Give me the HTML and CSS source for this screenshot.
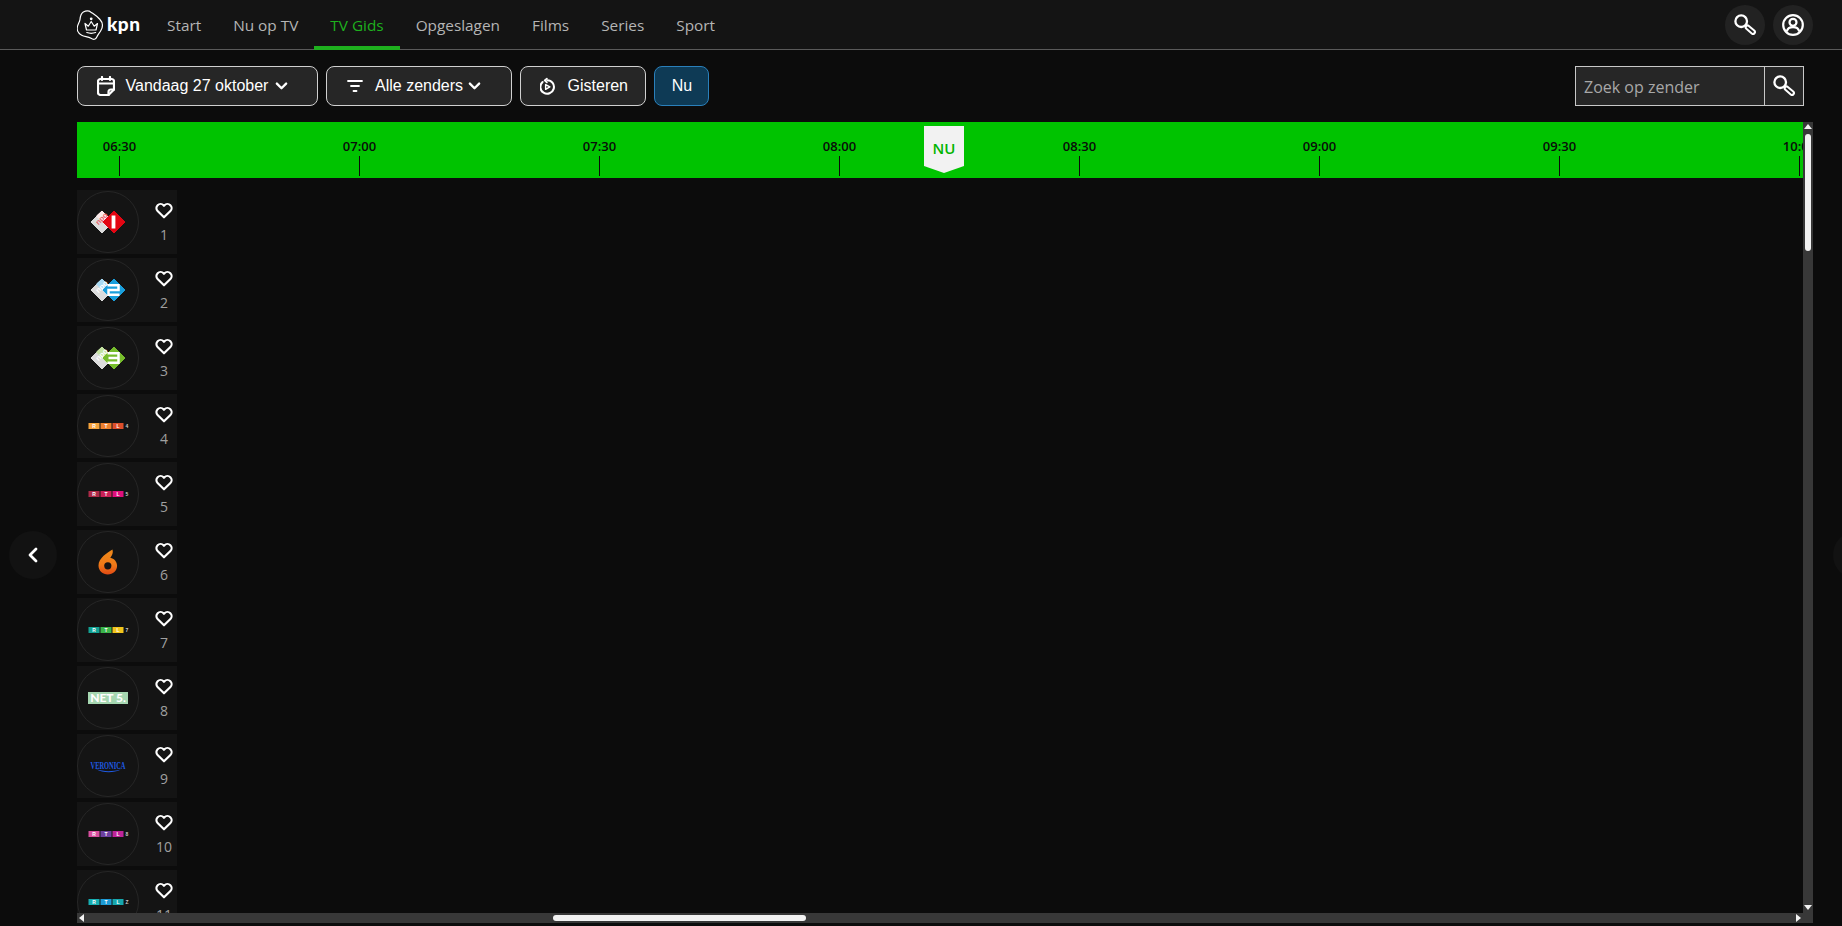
FILE: index.html
```html
<!DOCTYPE html>
<html lang="nl">
<head>
    <meta charset="UTF-8">
    <meta name="viewport" content="width=device-width, initial-scale=1.0">
    <title>KPN TV Gids</title>
    <link rel="stylesheet" href="styles.css">
</head>
<body>
    <svg class="defs" width="0" height="0">
        <symbol id="heart" viewBox="0 0 16 15">
            <path d="M8 13.600 2.300 8A3.700 3.700 0 0 1 7.600 2.800l.4.500.4-.5A3.700 3.700 0 0 1 13.700 8Z" fill="none" stroke="#fff" stroke-width="1.900" stroke-linejoin="round"/>
        </symbol>
        <symbol id="search" viewBox="0 0 24 24">
            <circle cx="8.200" cy="8.200" r="5.800" fill="none" stroke="#fff" stroke-width="2.300"/>
            <path d="M14.600 14.400 20 19" fill="none" stroke="#fff" stroke-width="5.800" stroke-linecap="round"/>
            <path d="M14.600 14.400 20 19" fill="none" stroke="#222" stroke-width="1.800" stroke-linecap="round"/>
        </symbol>
        <symbol id="chev" viewBox="0 0 14 9">
            <path d="M1.800 1.800 7 7l5.200-5.200" fill="none" stroke="#fff" stroke-width="2.600" stroke-linecap="round" stroke-linejoin="round"/>
        </symbol>
    </svg>

    <header class="topbar">
        <a class="logo">
            <svg width="28" height="30" viewBox="0 0 28 30" fill="none" stroke="#fff" stroke-width="1.200" stroke-linejoin="round" stroke-linecap="round">
                <path d="M6.300 2C9 .6 12 .6 14 2.200 16.500 4 20 6 23 9.500 26 12.800 26 16.800 24 20.300 22.500 23 21 24.500 19.800 27 18.800 29.600 16.500 30 14 28.300 11 26.300 7.500 27 4.700 25.300 1.500 23.300-.3 21 .3 17.500.7 14 2.500 12.500 3 9.500 3.300 6.500 4 3.300 6.300 2Z"/>
                <path d="M8 13.500 9.500 20h9.500l1.500-6.500-3.300 2.700L14.200 11.500 11.300 16.200Z"/>
                <path d="M9.800 22.500c2.800 1 6 1 8.800 0"/>
                <circle cx="14.200" cy="8.800" r=".8" fill="#fff"/>
            </svg>
            <span class="logo-text">kpn</span>
        </a>
        <nav class="mainnav">
            <a>Start</a>
            <a>Nu op TV</a>
            <a class="active">TV Gids</a>
            <a>Opgeslagen</a>
            <a>Films</a>
            <a>Series</a>
            <a>Sport</a>
        </nav>
        <div class="topbar-right">
            <button class="round"><svg width="24" height="24"><use href="#search"/></svg></button>
            <button class="round">
                <svg width="24" height="24" viewBox="0 0 24 24" fill="none" stroke="#fff" stroke-width="2.200">
                    <circle cx="12" cy="12" r="9.800"/>
                    <circle cx="12" cy="9.300" r="3.500"/>
                    <path d="M5.800 18.500c.6-3 2.800-4.300 6.200-4.300s5.600 1.300 6.200 4.300"/>
                </svg>
            </button>
        </div>
    </header>

    <div class="toolbar">
        <button class="btn btn-date">
            <svg width="18" height="20" viewBox="0 0 18 20" fill="none" stroke="#fff" stroke-width="2.200" stroke-linejoin="round" stroke-linecap="round">
                <path d="M11.500 19H3.500A2.500 2.500 0 0 1 1 16.500V5.500A2.500 2.500 0 0 1 3.500 3h11A2.500 2.500 0 0 1 17 5.500v8Z"/>
                <path d="M1 7.500h16M5 1v3M13 1v3"/>
                <path d="M11.500 19v-3a2.500 2.500 0 0 1 2.500-2.500h3"/>
            </svg>
            <span>Vandaag 27 oktober</span>
            <svg class="chev" width="13" height="8"><use href="#chev"/></svg>
        </button>
        <button class="btn btn-filter">
            <svg width="16" height="12" viewBox="0 0 16 12" fill="none" stroke="#fff" stroke-width="1.800" stroke-linecap="round">
                <path d="M1 1h14M4 6h8M6.500 11h3"/>
            </svg>
            <span>Alle zenders</span>
            <svg class="chev" width="13" height="8"><use href="#chev"/></svg>
        </button>
        <button class="btn btn-back">
            <svg width="18" height="20" viewBox="0 0 18 20" fill="none" stroke="#fff" stroke-width="2.500" stroke-linecap="round" stroke-linejoin="round">
                <path d="M3.200 5A8.400 8.400 0 1 0 9 2.800"/>
                <path d="M8.500 .8 5.800 3l2.700 2.500" stroke-width="2.200"/>
                <path d="M7 8.200v6l5.200-3Z" stroke-width="1.800"/>
            </svg>
            <span>Gisteren</span>
        </button>
        <button class="btn btn-now">Nu</button>
        <div class="zoek">
            <input type="text" placeholder="Zoek op zender">
            <button><svg width="24" height="24"><use href="#search"/></svg></button>
        </div>
    </div>

    <main class="guide">
        <div class="guide-main">
            <div class="timeline">
                <div class="tick"><span>06:30</span><i></i></div>
                <div class="tick"><span>07:00</span><i></i></div>
                <div class="tick"><span>07:30</span><i></i></div>
                <div class="tick"><span>08:00</span><i></i></div>
                <div class="tick"><span>08:30</span><i></i></div>
                <div class="tick"><span>09:00</span><i></i></div>
                <div class="tick"><span>09:30</span><i></i></div>
                <div class="tick"><span>10:00</span><i></i></div>
                <div class="now-flag">NU</div>
            </div>
            <div class="channels">
                <div class="channel">
                    <div class="zender">
                        <svg width="38" height="26" viewBox="-1 -1 38 26">
                            <path class="ruit" d="M12 1 23 12 12 23 1 12Z" fill="#dcdcdc" stroke="#dcdcdc"/>
                            <path class="ruit" d="M12 1 22 11 17 16.500 6.500 6Z" fill="#fbeaea" stroke="#fbeaea"/>
                            <text class="npo" x="12" y="11" transform="rotate(-45 12 9)" fill="#e8606a">npo</text>
                            <path class="ruit" d="M24 1 35 12 24 23 13 12Z" fill="#e30613" stroke="#e30613"/>
                            <path d="M23.500 5.500v13" stroke="#fff" stroke-width="3.800"/>
                        </svg>
                    </div>
                    <div class="side"><svg class="heart" width="18" height="17"><use href="#heart"/></svg><span>1</span></div>
                </div>
                <div class="channel">
                    <div class="zender">
                        <svg width="38" height="26" viewBox="-1 -1 38 26">
                            <path class="ruit" d="M12 1 23 12 12 23 1 12Z" fill="#dcdcdc" stroke="#dcdcdc"/>
                            <path class="ruit" d="M12 1 22 11 17 16.500 6.500 6Z" fill="#a8daf4" stroke="#a8daf4"/>
                            <text class="npo" x="12" y="11" transform="rotate(-45 12 9)" fill="#fff">npo</text>
                            <path class="ruit" d="M24 1 35 12 24 23 13 12Z" fill="#1a9fdc" stroke="#1a9fdc"/>
                            <path d="M17.500 7.300h11v4.700h-10v4.700h11" fill="none" stroke="#fff" stroke-width="2.500"/>
                        </svg>
                    </div>
                    <div class="side"><svg class="heart" width="18" height="17"><use href="#heart"/></svg><span>2</span></div>
                </div>
                <div class="channel">
                    <div class="zender">
                        <svg width="38" height="26" viewBox="-1 -1 38 26">
                            <path class="ruit" d="M12 1 23 12 12 23 1 12Z" fill="#dcdcdc" stroke="#dcdcdc"/>
                            <path class="ruit" d="M12 1 22 11 17 16.500 6.500 6Z" fill="#c3e2a0" stroke="#c3e2a0"/>
                            <text class="npo" x="12" y="11" transform="rotate(-45 12 9)" fill="#fff">npo</text>
                            <path class="ruit" d="M24 1 35 12 24 23 13 12Z" fill="#76bc2c" stroke="#76bc2c"/>
                            <path d="M17.500 7.300h11v9.400h-11M18.500 12h10" fill="none" stroke="#fff" stroke-width="2.500"/>
                        </svg>
                    </div>
                    <div class="side"><svg class="heart" width="18" height="17"><use href="#heart"/></svg><span>3</span></div>
                </div>
                <div class="channel">
                    <div class="zender">
                        <svg class="rtl" width="44" height="8" viewBox="0 0 44 8">
                            <rect x="2.500" y="1" width="11" height="6" fill="#f5a33c"/>
                            <rect x="14.500" y="1" width="11" height="6" fill="#ee7f2d"/>
                            <rect x="26.500" y="1" width="11" height="6" fill="#de4f2b"/>
                            <text x="8" y="6" fill="#fff">R</text><text x="20" y="6" fill="#fff">T</text><text x="32" y="6" fill="#fff">L</text>
                            <text x="41" y="6" fill="#ccc">4</text>
                        </svg>
                    </div>
                    <div class="side"><svg class="heart" width="18" height="17"><use href="#heart"/></svg><span>4</span></div>
                </div>
                <div class="channel">
                    <div class="zender">
                        <svg class="rtl" width="44" height="8" viewBox="0 0 44 8">
                            <rect x="2.500" y="1" width="11" height="6" fill="#ad2a48"/>
                            <rect x="14.500" y="1" width="11" height="6" fill="#c92056"/>
                            <rect x="26.500" y="1" width="11" height="6" fill="#e00f7c"/>
                            <text x="8" y="6" fill="#fff">R</text><text x="20" y="6" fill="#fff">T</text><text x="32" y="6" fill="#fff">L</text>
                            <text x="41" y="6" fill="#ccc">5</text>
                        </svg>
                    </div>
                    <div class="side"><svg class="heart" width="18" height="17"><use href="#heart"/></svg><span>5</span></div>
                </div>
                <div class="channel">
                    <div class="zender">
                        <svg width="20" height="26" viewBox="0 0 20 26">
                            <defs>
                                <linearGradient id="zes" x1="0" y1="0" x2="0" y2="1">
                                    <stop offset="0" stop-color="#f08a1a"/>
                                    <stop offset=".6" stop-color="#ef7a18"/>
                                    <stop offset="1" stop-color="#e24a14"/>
                                </linearGradient>
                            </defs>
                            <path d="M14.500 .5C9.500 3.500.5 9 .5 16.500c0 5.200 4.200 9 9.300 9s9.300-3.800 9.300-8.700c0-4-2.900-7.300-6.800-8.100C14 6.500 15.500 4 14.500 .5Z" fill="url(#zes)"/>
                            <circle cx="9.800" cy="16.800" r="3.600" fill="#141414"/>
                        </svg>
                    </div>
                    <div class="side"><svg class="heart" width="18" height="17"><use href="#heart"/></svg><span>6</span></div>
                </div>
                <div class="channel">
                    <div class="zender">
                        <svg class="rtl" width="44" height="8" viewBox="0 0 44 8">
                            <rect x="2.500" y="1" width="11" height="6" fill="#12a294"/>
                            <rect x="14.500" y="1" width="11" height="6" fill="#3bb44a"/>
                            <rect x="26.500" y="1" width="11" height="6" fill="#f2c41c"/>
                            <text x="8" y="6" fill="#fff">R</text><text x="20" y="6" fill="#fff">T</text><text x="32" y="6" fill="#fff">L</text>
                            <text x="41" y="6" fill="#ccc">7</text>
                        </svg>
                    </div>
                    <div class="side"><svg class="heart" width="18" height="17"><use href="#heart"/></svg><span>7</span></div>
                </div>
                <div class="channel">
                    <div class="zender"><span class="net5">NET 5.</span></div>
                    <div class="side"><svg class="heart" width="18" height="17"><use href="#heart"/></svg><span>8</span></div>
                </div>
                <div class="channel">
                    <div class="zender">
                        <svg width="38" height="14" viewBox="0 0 38 14">
                            <text class="veronica" x="19" y="9.500" textLength="35" lengthAdjust="spacingAndGlyphs">VERONICA</text>
                            <path d="M7 10.300c8 2.400 16 2.400 25 .2-8 4-18 3.500-25-.2Z" fill="#1f5be6"/>
                        </svg>
                    </div>
                    <div class="side"><svg class="heart" width="18" height="17"><use href="#heart"/></svg><span>9</span></div>
                </div>
                <div class="channel">
                    <div class="zender">
                        <svg class="rtl" width="44" height="8" viewBox="0 0 44 8">
                            <rect x="2.500" y="1" width="11" height="6" fill="#d64e9e"/>
                            <rect x="14.500" y="1" width="11" height="6" fill="#6c3fa0"/>
                            <rect x="26.500" y="1" width="11" height="6" fill="#bf249a"/>
                            <text x="8" y="6" fill="#fff">R</text><text x="20" y="6" fill="#fff">T</text><text x="32" y="6" fill="#fff">L</text>
                            <text x="41" y="6" fill="#ccc">8</text>
                        </svg>
                    </div>
                    <div class="side"><svg class="heart" width="18" height="17"><use href="#heart"/></svg><span>10</span></div>
                </div>
                <div class="channel">
                    <div class="zender">
                        <svg class="rtl" width="44" height="8" viewBox="0 0 44 8">
                            <rect x="2.500" y="1" width="11" height="6" fill="#17aeb2"/>
                            <rect x="14.500" y="1" width="11" height="6" fill="#1d9bd6"/>
                            <rect x="26.500" y="1" width="11" height="6" fill="#16a7ae"/>
                            <text x="8" y="6" fill="#fff">R</text><text x="20" y="6" fill="#fff">T</text><text x="32" y="6" fill="#fff">L</text>
                            <text x="41" y="6" fill="#ccc">Z</text>
                        </svg>
                    </div>
                    <div class="side"><svg class="heart" width="18" height="17"><use href="#heart"/></svg><span>11</span></div>
                </div>
            </div>
        </div>
        <div class="vscroll">
            <i class="arrow-up"></i>
            <div class="vthumb"></div>
            <i class="arrow-down"></i>
        </div>
        <div class="hscroll">
            <i class="arrow-left"></i>
            <div class="hthumb"></div>
            <i class="arrow-right"></i>
        </div>
        <div class="scroll-corner"></div>
    </main>

    <button class="pager pager-prev">
        <svg width="12" height="16" viewBox="0 0 12 16"><path d="M9 2 3 8l6 6" fill="none" stroke="#fff" stroke-width="2.800" stroke-linecap="round" stroke-linejoin="round"/></svg>
    </button>
    <button class="pager pager-next"></button>
</body>
</html>
```

FILE: styles.css
```css
* {
    box-sizing: border-box;
}
html, body {
    height: 100%;
}
body {
    margin: 0;
    display: flex;
    flex-direction: column;
    overflow: hidden;
    background: #0c0c0c;
    color: #fff;
    font-family: "Open Sans", sans-serif;
}
.defs {
    position: absolute;
}
button {
    font: inherit;
    color: inherit;
    cursor: pointer;
}

/* top bar */
.topbar {
    display: flex;
    align-items: stretch;
    height: 50px;
    flex: none;
    padding: 0 29px 0 77px;
    background: #141414;
    border-bottom: 1px solid #5a5a5a;
}
.logo {
    display: flex;
    align-items: center;
    gap: 2px;
    width: 74px;
}
.logo-text {
    font-family: Lato, sans-serif;
    font-weight: 900;
    font-size: 19px;
    letter-spacing: .5px;
    line-height: 1;
    margin-top: -3px;
}
.mainnav {
    display: flex;
}
.mainnav a {
    display: flex;
    align-items: center;
    padding: 4px 16px 1px;
    margin-bottom: -1px;
    font-size: 15.350px;
    color: #b5b5b5;
    border-bottom: 4px solid transparent;
}
.mainnav a.active {
    color: #1eb01e;
    border-bottom-color: #1eb01e;
}
.topbar-right {
    margin-left: auto;
    display: flex;
    align-items: center;
    gap: 8px;
}
.round {
    width: 40px;
    height: 40px;
    padding: 0;
    border: 0;
    border-radius: 50%;
    background: #222;
    display: flex;
    align-items: center;
    justify-content: center;
}

/* filter row */
.toolbar {
    display: flex;
    flex: none;
    gap: 8px;
    padding: 16px 38px 16px 77px;
}
.btn {
    display: flex;
    align-items: center;
    height: 40px;
    padding: 0 17px;
    border: 1px solid #d0d0d0;
    border-radius: 8px;
    background: #262626;
    font-family: "Liberation Sans", Arial, sans-serif;
    font-size: 16px;
    white-space: nowrap;
}
.btn-date {
    width: 241px;
    padding-left: 19px;
    gap: 10.500px;
}
.btn-filter {
    width: 186px;
    padding-left: 20px;
    gap: 12px;
}
.btn-back {
    width: 126px;
    padding-left: 19px;
    gap: 13px;
}
.btn-now {
    width: 55px;
    justify-content: center;
    padding: 0 0 0 1px;
    background: #0e3a55;
    border-color: #2a80bb;
}
.chev {
    margin-left: -4px;
}
.btn-filter .chev {
    margin-left: -7px;
}
.zoek {
    margin-left: auto;
    display: flex;
    height: 40px;
    width: 229px;
    border: 1px solid #c8c8c8;
    background: #262626;
}
.zoek input {
    width: 188px;
    padding: 2px 8px 0;
    border: 0;
    outline: 0;
    background: transparent;
    color: #fff;
    font-family: "Open Sans", sans-serif;
    font-size: 16px;
}
.zoek input::placeholder {
    color: #a8a8a8;
    opacity: 1;
}
.zoek button {
    flex: 1;
    padding: 0;
    border: 0;
    border-left: 1px solid #c8c8c8;
    background: transparent;
    display: flex;
    align-items: center;
    justify-content: center;
}

/* guide */
.guide {
    flex: 1;
    min-height: 0;
    display: grid;
    grid-template-columns: 1fr 10px;
    grid-template-rows: 1fr 10px;
    margin: 0 29px 3px 77px;
}
.guide-main {
    min-width: 0;
    min-height: 0;
    overflow: hidden;
}
.timeline {
    position: relative;
    display: flex;
    height: 56px;
    background: #00c300;
    color: #0a0a0a;
    overflow: hidden;
}
.tick {
    flex: none;
    width: 240px;
    display: flex;
    flex-direction: column;
    align-items: center;
    padding-top: 15px;
    font-size: 13px;
    font-weight: 600;
    line-height: 19px;
}
.tick:first-child {
    margin-left: -77.500px;
}
.tick i {
    display: block;
    width: 1px;
    height: 20px;
    background: #0a0a0a;
}
.now-flag {
    position: absolute;
    left: 847px;
    top: 4px;
    width: 40px;
    height: 47px;
    padding-top: 11px;
    background: #f2f2f2;
    color: #00b400;
    font-size: 15px;
    font-weight: 600;
    line-height: 22px;
    text-align: center;
    clip-path: polygon(0 0, 100% 0, 100% 85%, 50% 100%, 0 85%);
}
.channels {
    display: flex;
    flex-direction: column;
    gap: 4px;
    margin-top: 12px;
}
.channel {
    display: flex;
    width: 100px;
    height: 64px;
    flex: none;
    background: #141414;
}
.zender {
    width: 62px;
    height: 62px;
    margin-top: 1px;
    flex: none;
    border: 1px solid #262626;
    border-radius: 50%;
    display: flex;
    align-items: center;
    justify-content: center;
}
.side {
    flex: 1;
    display: flex;
    flex-direction: column;
    align-items: center;
    padding: 12px 0 0 12px;
    color: #a0a0a0;
    font-size: 14px;
    line-height: 20px;
}
.heart {
    margin-bottom: 6px;
}
.ruit {
    stroke-width: 1;
    stroke-linejoin: round;
}
.npo {
    font-family: "Liberation Sans", sans-serif;
    font-size: 7.500px;
    font-weight: 700;
    text-anchor: middle;
}
.rtl text {
    font-family: "Liberation Sans", sans-serif;
    font-size: 5px;
    font-weight: 700;
    text-anchor: middle;
}
.net5 {
    width: 40px;
    height: 12px;
    background: #a6d7b1;
    font-family: Lato, sans-serif;
    font-size: 12px;
    font-weight: 900;
    line-height: 12px;
    text-align: center;
    white-space: nowrap;
}
.veronica {
    font-family: "Liberation Serif", serif;
    font-size: 10px;
    font-weight: 700;
    fill: #1f5be6;
    text-anchor: middle;
}

/* scrollbars */
.vscroll, .hscroll, .scroll-corner {
    background: #383838;
}
.vscroll {
    display: flex;
    flex-direction: column;
    align-items: center;
    padding: 2px 0;
}
.vthumb {
    width: 6px;
    height: 117px;
    margin-top: 5px;
    border-radius: 3px;
    background: #f2f2f2;
}
.hscroll {
    display: flex;
    align-items: center;
    padding: 0 2px;
}
.hthumb {
    width: 253px;
    height: 6px;
    margin-left: 469px;
    border-radius: 3px;
    background: #f2f2f2;
}
.arrow-up, .arrow-down, .arrow-left, .arrow-right {
    display: block;
    width: 0;
    height: 0;
    border: 4px solid transparent;
    flex: none;
}
.arrow-up {
    border-top: 0;
    border-bottom: 5px solid #f2f2f2;
}
.arrow-down {
    margin-top: auto;
    margin-bottom: 1px;
    border-bottom: 0;
    border-top: 5px solid #f2f2f2;
}
.arrow-left {
    border-left: 0;
    border-right: 5px solid #f2f2f2;
}
.arrow-right {
    margin-left: auto;
    border-right: 0;
    border-left: 5px solid #f2f2f2;
}

/* paging circles */
.pager {
    position: absolute;
    top: 531px;
    width: 48px;
    height: 48px;
    padding: 0;
    border: 0;
    border-radius: 50%;
    background: #121212;
    display: flex;
    align-items: center;
    justify-content: center;
}
.pager-prev {
    left: 9px;
}
.pager-next {
    left: 1833px;
}
```
